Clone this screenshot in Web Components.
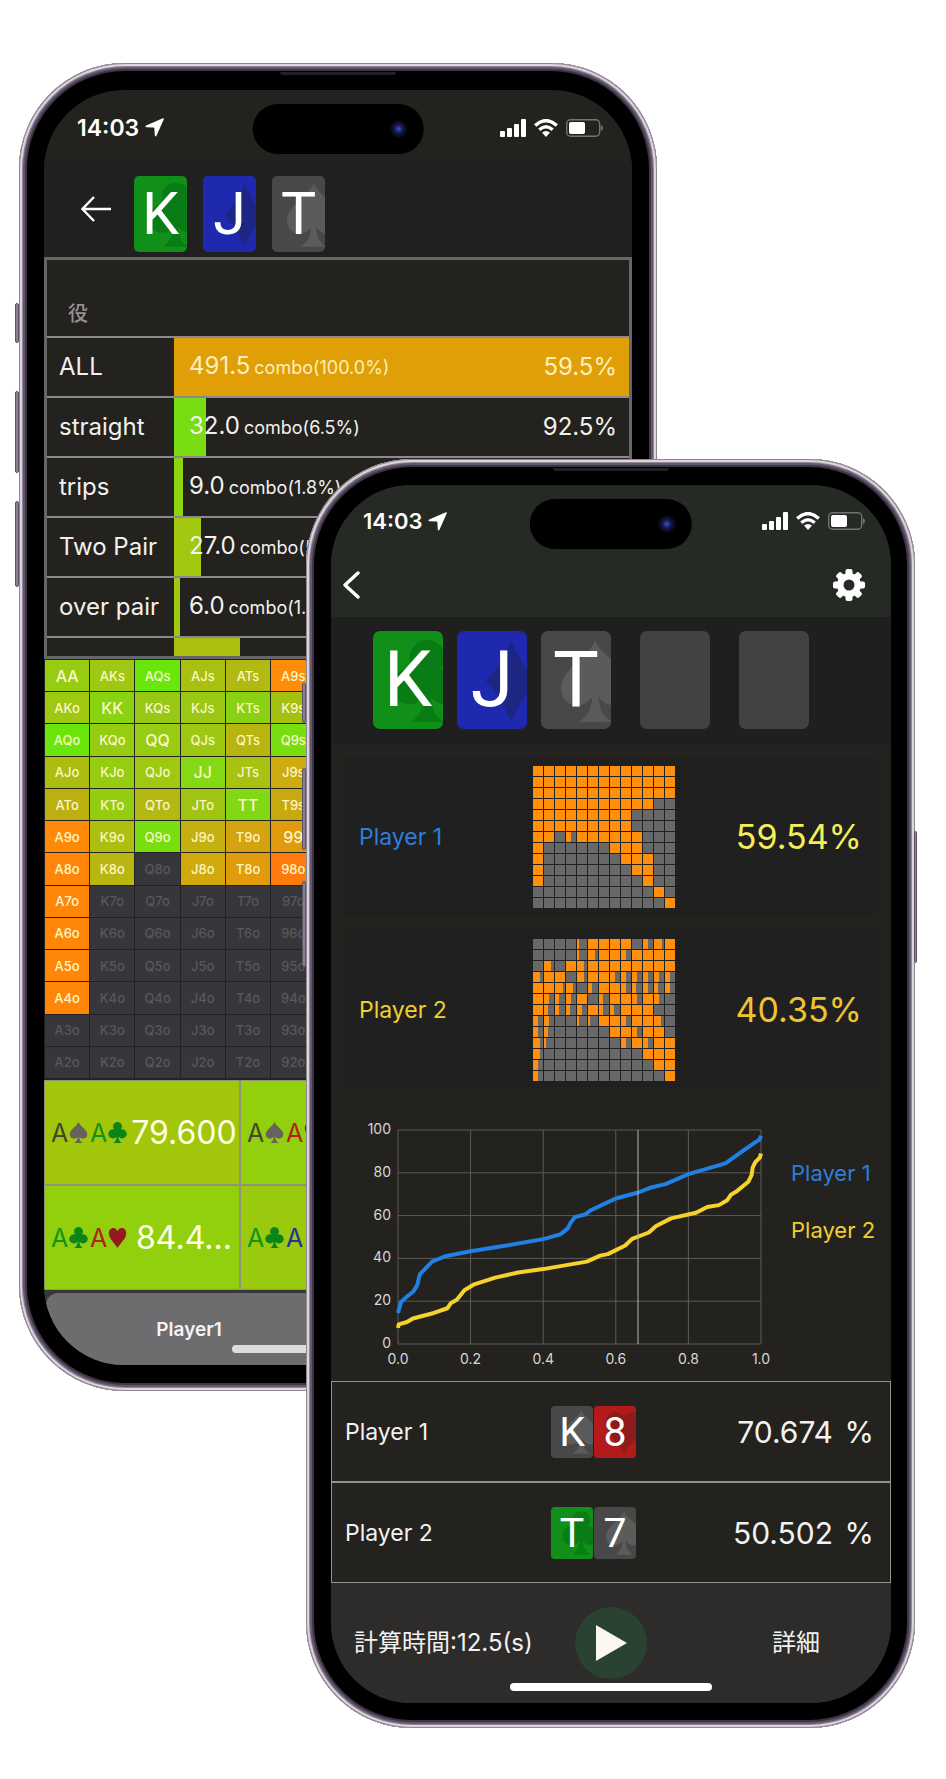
<!DOCTYPE html>
<html lang="ja">
<head>
<meta charset="utf-8">
<meta name="viewport" content="width=device-width, initial-scale=1">
<title>Poker equity calculator</title>
<style>
  body { margin: 0; background: #fff; font-family: Inter, "Noto Sans CJK JP", sans-serif; color: #f2f2f0; }
</style>
</head>
<body>
<app-stage></app-stage>

<script>
const define = (name, html, setup) => {
  const template = document.createElement('template');
  template.innerHTML = html;
  customElements.define(name, class extends HTMLElement {
    constructor() {
      super();
      this.attachShadow({ mode: 'open' }).append(template.content.cloneNode(true));
    }
    connectedCallback() {
      if (setup && !this.ready) { this.ready = true; setup(this, this.shadowRoot); }
    }
  });
};

/* Suit outlines on a 20 x 24 canvas */
const SUITS = {
  s: '<path d="M10 0C11 4 20 8.500 20 14C20 17.500 17.600 19 15.400 19C13.400 19 11.800 18 10.900 16.500C11 20 12.300 22.500 15 24H5C7.700 22.500 9 20 9.100 16.500C8.200 18 6.600 19 4.600 19C2.400 19 0 17.500 0 14C0 8.500 9 4 10 0Z"/>',
  c: '<path d="M10 0A5 5 0 0 1 13.600 8.600A5.200 5.200 0 1 1 11 16.500C11.200 20 12.400 22.600 15 24H5C7.600 22.600 8.800 20 9 16.500A5.200 5.200 0 1 1 6.400 8.600A5 5 0 0 1 10 0Z"/>',
  d: '<path d="M10 0C12 5 14.500 9 17.500 12C14.500 15 12 19 10 24C8 19 5.500 15 2.500 12C5.500 9 8 5 10 0Z"/>',
  h: '<path d="M10 24C8 19.500 0 13.500 0 7C0 3.500 2.300 1 5.200 1C7.500 1 9.300 2.500 10 4.800C10.700 2.500 12.500 1 14.800 1C17.700 1 20 3.500 20 7C20 13.500 12 19.500 10 24Z"/>'
};
const suitSvg = s => `<svg viewBox="0 0 20 24" aria-hidden="true">${SUITS[s]}</svg>`;

define('device-frame', `
<style>
  :host { display: block; position: relative; box-sizing: border-box; background: #000; border-radius: 106px;
    box-shadow: inset 0 0 0 1px #8d8790, inset 0 0 0 3px #ddd5de, inset 0 0 0 4px #94889a, inset 0 0 0 6px #62576c, inset 0 0 0 8px #3c3545; }
  .screen { position: relative; overflow: hidden; border-radius: 80px; background: #24221f; }
  .key { position: absolute; width: 4px; box-sizing: border-box; background: #8b8093; border: 1px solid #5d5366; border-radius: 2px; }
  .left { left: -4px; }
  .mute { top: var(--mute); height: 40px; }
  .up { top: var(--up); height: 82px; }
  .down { top: var(--down); height: 86px; }
  .power { display: var(--power, block); right: -2px; top: 372px; height: 132px; width: 3px; }
  .speaker { position: absolute; top: 9px; left: 50%; width: 116px; margin-left: -58px; height: 3px; border-radius: 0 0 3px 3px; background: #222226; }
  .home { position: absolute; bottom: 12px; left: 50%; width: 36%; margin-left: -18%; height: 8px; border-radius: 4px; background: var(--home, #fff); }
</style>
<i class="key left mute"></i><i class="key left up"></i><i class="key left down"></i><i class="key power"></i>
<i class="speaker"></i>
<div class="screen"><slot></slot><i class="home"></i></div>`);

define('status-bar', `
<style>
  :host { display: flex; align-items: center; box-sizing: border-box; position: relative; height: var(--bar, 71px); padding: 4px 29px 0 33px; color: #fff; }
  time { font-weight: 600; font-size: var(--clock, 23px); line-height: 28px; margin-right: 6px; }
  svg { display: block; fill: currentColor; }
  .icons { display: flex; align-items: center; gap: 8px; margin-left: auto; }
  .island { position: absolute; top: 14px; left: 50%; width: 29%; height: 50px; transform: translateX(-50%); background: #000; border-radius: 25px; }
  .lens { position: absolute; right: 16px; top: 16px; width: 18px; height: 18px; border-radius: 50%;
    background: radial-gradient(circle, #3546a8 0 1px, #151a55 4px, #0b0b22 7px, #050508 9px); }
</style>
<time>14:03</time>
<svg width="19" height="19" viewBox="0 0 19 19" role="img" aria-label="Location"><path d="M17.800 .3Q19.200 .2 18.700 1.500L11.600 17.600Q10.400 19.500 9.800 17.400L9.400 10.600Q9.300 9.700 8.400 9.600L1.600 9.200Q-.6 8.700 1.200 7.500Z"/></svg>
<div class="island"><div class="lens"></div></div>
<div class="icons">
  <svg width="26" height="18" viewBox="0 0 26 18" role="img" aria-label="Signal"><rect y="12" width="5" height="6" rx="1"/><rect x="7" y="9" width="5" height="9" rx="1"/><rect x="14" y="5" width="5" height="13" rx="1"/><rect x="21" width="5" height="18" rx="1"/></svg>
  <svg width="24" height="18" viewBox="0 0 24 18" role="img" aria-label="Wi-Fi"><g fill="none" stroke="currentColor" stroke-width="3.400"><path d="M1.200 6.600Q12-3.400 22.800 6.600"/><path d="M5.300 10.800Q12 4.800 18.700 10.800"/></g><path d="M8 13.600Q12 10.400 16 13.600L12 18Z"/></svg>
  <svg width="37" height="18" viewBox="0 0 37 18" role="img" aria-label="Battery"><rect x=".7" y=".7" width="33" height="16.600" rx="4" fill="none" stroke="#74746f" stroke-width="1.400"/><rect x="3" y="3" width="16" height="12" rx="2"/><path d="M35 6Q37 7 37 9T35 12Z" fill="#74746f"/></svg>
</div>`);

define('playing-card', `
<style>
  :host { display: block; position: relative; overflow: hidden; flex: none; width: var(--w); height: var(--h); border-radius: var(--r, 6px);
    background: #424242; color: #fff; text-align: center; font: 400 var(--fs)/var(--h) Roboto, sans-serif; }
  :host([suit=c]) { background: #109018; } :host([suit=d]) { background: #1f29b0; }
  :host([suit=s]) { background: #484848; } :host([suit=h]) { background: #b31b1b; }
  svg { position: absolute; left: 28%; top: 9%; height: 84%; width: auto; }
  :host([suit=c]) svg { fill: #0a7c16; } :host([suit=d]) svg { fill: #1d2683; }
  :host([suit=s]) svg { fill: #5b5b5b; } :host([suit=h]) svg { fill: #8c1b1b; }
  span { position: relative; }
</style><div class="pip"></div><span><slot></slot></span>`, (el, root) => {
  const suit = el.getAttribute('suit');
  if (suit) root.querySelector('.pip').innerHTML = suitSvg(suit);
});

define('hand-ranking', `
<style>
  :host { display: block; border: 3px solid #66656a; background: #24221f; }
  table { width: 100%; border-collapse: separate; border-spacing: 0; table-layout: fixed; }
  th, td { box-sizing: border-box; height: 60px; padding: 0; border-bottom: 2px solid #8b8a8b; font-weight: 400; font-size: 24px; line-height: 30px; text-align: left; color: #f2f1ee; white-space: nowrap; }
  thead th { height: 78px; padding: 30px 0 0 21px; font: 500 20px/24px "Noto Sans CJK JP", sans-serif; color: #929196; }
  tbody th { padding-left: 12px; }
  col.name { width: 127px; } col.odds { width: 110px; }
  td.combo { padding-left: 15px; }
  td.odds { text-align: right; padding-right: 12px; }
  small { font-size: 18px; margin-left: 4px; }
  .all td { color: #ffeebb; }
  tr.cut > * { height: 18px; border: 0; }
  tr { background: linear-gradient(var(--c), var(--c)) 127px 0 / var(--n) 100% no-repeat; }
</style>
<table><colgroup><col class="name"><col><col class="odds"></colgroup>
<thead><tr><th colspan="3" scope="col">役</th></tr></thead><tbody></tbody></table>`, (el, root) => {
  const rows = [
    ['ALL', '491.5', '(100.0%)', '59.5%', '#e09f06', '460px', 'all'],
    ['straight', '32.0', '(6.5%)', '92.5%', '#7add14', '32px', ''],
    ['trips', '9.0', '(1.8%)', '', '#8cd40f', '9px', ''],
    ['Two Pair', '27.0', '(5', '', '#a2c80f', '27px', ''],
    ['over pair', '6.0', '(1.', '', '#a0ca10', '6px', '']
  ];
  root.querySelector('tbody').innerHTML = rows.map(([n, c, p, o, col, w, k]) =>
    `<tr class="${k}" style="--c:${col};--n:${w}"><th scope="row">${n}</th><td class="combo">${c}<small>combo${p}</small></td><td class="odds">${o}</td></tr>`
  ).join('') + '<tr class="cut" style="--c:#aabf10;--n:66px"><td></td><td></td><td></td></tr>';
});

define('hand-grid', `
<style>
  :host { display: grid; grid-template-columns: repeat(13, 1fr); grid-template-rows: repeat(13, 1fr); gap: 1px; height: 420px; box-sizing: border-box; padding: 1px 0 1px 1px; background: #222; }
  span { display: flex; align-items: center; justify-content: center; min-width: 0; font-size: 13px; font-weight: 500; color: #fbf6c4; background: #37363a; }
  .pair { font-size: 16px; }
  .off { color: #59585c; }
</style>`, (el, root) => {
  const ranks = 'AKQJT98765432';
  const shade = [
    '96cc12 9ec812 6ae60c a8c010 b0ba12 ff8c08', '9ec812 8ad312 96c814 9ac814 8ad014 a4c010',
    '6ae60c 96cc12 98cc12 9cc814 b8b410 78de10', 'acbc10 96cc12 9ec812 84d814 a8c212 ccac10',
    'bcb010 94cc12 b4b812 a0c412 82d814 c8aa10', 'ff8a0a acbe10 78de10 c4b010 d4a410 e09a0c',
    'ff860a b8b610 - d0aa0c e09c0c ff7a0c', 'ff8608', 'ff8608', 'ff8608', 'ff8608', '', ''
  ].map(r => r.split(' '));
  for (let r = 0; r < 13; r++) for (let c = 0; c < 6; c++) {
    const cell = document.createElement('span');
    const hi = ranks[Math.min(r, c)], lo = ranks[Math.max(r, c)];
    cell.textContent = hi + lo + (r === c ? '' : r < c ? 's' : 'o');
    cell.style.gridArea = `${r + 1} / ${c + 1}`;
    const color = shade[r][c];
    if (color && color !== '-') cell.style.background = '#' + color; else cell.className = 'off';
    if (r === c) cell.classList.add('pair');
    root.append(cell);
  }
});

define('combo-list', `
<style>
  :host { display: grid; grid-template-columns: repeat(3, 1fr); gap: 2px; padding: 1px; margin-top: 1px; background: #8f9377; }
  .combo { display: flex; align-items: center; height: 103px; padding-left: 6px; min-width: 0; font-size: 25px; line-height: 30px; }
  .combo svg { width: 21px; height: 21px; flex: none; fill: currentColor; }
  .s { color: #45462e; } .s svg { fill: #67625f; } .c { color: #13931a; } .c svg { fill: #0b8418; }
  .h { color: #ae2418; } .h svg { fill: #951a20; } .d { color: #23309a; }
  .card { display: flex; align-items: center; width: 39px; }
  .value { flex: 1; text-align: center; font-size: 32px; line-height: 38px; color: #fffde6; }
</style>`, (el, root) => {
  const list = [['s', 'c', '79.600', '#a2c60a'], ['s', 'h', '', '#92d00e'], null, ['c', 'h', '84.4...', '#92d00e'], ['c', 'd', '', '#9aca0e']];
  list.forEach((item, i) => {
    const box = document.createElement('div');
    box.className = 'combo';
    if (item) {
      const [a, b, value, color] = item;
      box.style.background = color;
      box.innerHTML = [a, b].map(s => `<span class="card ${s}">A${suitSvg(s)}</span>`).join('') + `<span class="value">${value}</span>`;
    } else box.style.background = '#92d00e';
    root.append(box);
  });
});

define('detail-screen', `
<style>
  :host { display: block; }
  header { display: flex; align-items: flex-start; gap: 16px; height: 96px; box-sizing: border-box; padding: 15px 0 0 37px; background: #202021; }
  button { font: inherit; color: inherit; border: 0; padding: 0; background: none; }
  .back { width: 37px; height: 66px; }
  .back svg { display: block; }
  playing-card { --w: 53px; --h: 76px; --fs: 59px; --r: 5px; }
  nav { display: flex; height: 75px; box-sizing: border-box; padding: 3px 2px 0; background: #38383a; }
  .tabs { flex: 1; display: flex; border-radius: 12px 12px 0 0; background: #6d6d70; }
  .tabs button { width: 49%; font-size: 19px; font-weight: 600; color: #f4f4f4; }
</style>
<status-bar></status-bar>
<header>
  <button class="back" aria-label="Back"><svg width="30" height="30" viewBox="0 0 30 30" fill="none" stroke="#fff" stroke-width="2.400"><path d="M13 3L1.500 15L13 27M1.500 15H30"/></svg></button>
  <playing-card suit="c">K</playing-card><playing-card suit="d">J</playing-card><playing-card suit="s">T</playing-card>
</header>
<hand-ranking></hand-ranking>
<hand-grid></hand-grid>
<combo-list></combo-list>
<nav><div class="tabs"><button>Player1</button></div></nav>`);

define('range-map', `
<style>
  :host { display: grid; grid-template: repeat(13, 1fr) / repeat(13, 1fr); gap: 1px; width: 142px; height: 142px; }
  i { background: linear-gradient(90deg, #ff8f0c var(--f), #686868 var(--f)); }
</style>`, (el, root) => {
  for (const ch of el.getAttribute('cells').replace(/\s/g, '')) {
    const i = document.createElement('i');
    i.style.setProperty('--f', ch === '#' ? '100%' : ch === '.' ? '0%' : ch + '0%');
    root.append(i);
  }
});

define('player-range', `
<style>
  :host { display: grid; grid-template-columns: 174px 142px 1fr; align-items: center; height: 160px; box-sizing: border-box; padding: 0 16px 0 15px; background: #202020; border-radius: 4px; }
  .name { font-size: 23px; line-height: 28px; color: var(--name); }
  .odds { font-size: 34px; line-height: 40px; text-align: right; color: var(--odds); }
</style>
<span class="name"><slot name="name"></slot></span><slot></slot><span class="odds"><slot name="odds"></slot></span>`);

define('equity-chart', `
<style>
  :host { display: grid; grid-template-columns: 450fr 110fr; height: 290px; }
  svg { width: 100%; height: 290px; }
  text { font-size: 14px; fill: #d8d8d4; }
  .grid { stroke: #5c5b57; stroke-width: 1; fill: none; }
  .line { fill: none; stroke-width: 4; stroke-linejoin: round; }
  ul { min-width: 0; margin: 0; padding: 68px 0 0 10px; box-sizing: border-box; list-style: none; font-size: 22px; line-height: 28px; white-space: nowrap; }
  li + li { margin-top: 29px; }
  .one { color: #2b7fdb; } .two { color: #f0d030; }
</style>
<svg viewBox="0 0 450 290" role="img" aria-label="Equity"></svg>
<ul><li class="one">Player 1</li><li class="two">Player 2</li></ul>`, (el, root) => {
  const X = v => 67 + v * 363, Y = v => 253 - v * 2.14;
  const one = [0,14.5,.008,19.5,.017,21,.042,24.5,.053,27.5,.06,32.5,.094,38.5,.13,41,.2,43.3,.278,45.4,.4,49,.447,51.2,.468,54,.475,56.5,.487,59.3,.515,60.5,.531,62.5,.6,68,.662,70.8,.694,73,.737,74.7,.8,79.4,.902,84.4,.953,90.6,.984,94.2,.996,95.5,1,97.3];
  const two = [0,7.5,.002,9.2,.025,10.3,.041,11.9,.099,14.5,.136,16.7,.146,19.2,.162,20.7,.183,25.1,.21,27.9,.268,31,.331,33.4,.4,35,.52,38.5,.557,41.3,.578,42,.626,46,.645,49.1,.691,52.1,.71,55,.752,58.7,.821,61.3,.852,64,.884,64.9,.907,67.2,.918,69.9,.931,71.1,.965,75.8,.974,78.9,.977,82.4,.984,84.9,.997,87.2,1,89];
  const line = (d, color) => {
    let p = '';
    for (let i = 0; i < d.length; i += 2) p += `${X(d[i])},${Y(d[i + 1])} `;
    return `<polyline class="line" stroke="${color}" points="${p}"/>`;
  };
  let out = '';
  for (let i = 0; i <= 5; i++) {
    out += `<path class="grid" d="M${X(i / 5)} 39V253M67 ${Y(i * 20)}H430"/>`;
    out += `<text x="60" y="${Y(i * 20) + 4}" text-anchor="end">${i * 20}</text>`;
    out += `<text x="${X(i / 5)}" y="273" text-anchor="middle">${(i / 5).toFixed(1)}</text>`;
  }
  root.querySelector('svg').innerHTML = out + line(one, '#2080e4') + line(two, '#f6d22c') + '<path stroke="#b4b4b0" d="M307 39V253"/>';
});

define('result-row', `
<style>
  :host { display: grid; grid-template-columns: 206px 86px 1fr 41px; align-items: center; height: 101px; box-sizing: border-box; border: 1px solid #93928f; padding: 0 16px 0 13px; background: #24221f; }
  .name { font-size: 23px; line-height: 28px; }
  .cards { display: flex; gap: 1px; }
  .value, .unit { font-size: 30px; line-height: 36px; text-align: right; }
  ::slotted(playing-card) { --w: 42px; --h: 52px; --fs: 41px; --r: 4px; }
</style>
<span class="name"><slot name="name"></slot></span><span class="cards"><slot></slot></span><span class="value"><slot name="value"></slot></span><span class="unit">%</span>`);

define('equity-screen', `
<style>
  :host { display: block; }
  status-bar { --bar: 68px; --clock: 22px; padding-right: 26px; padding-left: 32px; }
  button { font: inherit; color: inherit; border: 0; padding: 0; background: none; }
  svg { display: block; }
  .top { background: #262a24; }
  .bar { display: flex; justify-content: space-between; align-items: center; height: 64px; padding: 0 25px 0 11px; }
  .board { display: flex; height: 127px; box-sizing: border-box; padding: 14px 42px; background: #1f1f1f; }
  .board playing-card { --w: 70px; --h: 98px; --fs: 77px; --r: 7px; margin-right: 14px; }
  .board playing-card:nth-child(n+3) { margin-right: 29px; }
  .ranges { display: grid; gap: 13px; padding: 13px 13px 1px; }
  footer { display: grid; grid-template-columns: 1fr 72px 1fr; align-items: center; height: 120px; background: #2e2c2b; font-size: 24px; line-height: 32px; }
  .time { padding-left: 23px; white-space: nowrap; }
  .play { width: 72px; height: 72px; border-radius: 50%; background: #2a4231; display: grid; place-items: center; }
  .detail { justify-self: center; padding-left: 54px; }
</style>
<div class="top"><status-bar></status-bar>
<div class="bar">
  <button aria-label="Back"><svg width="18" height="30" viewBox="0 0 18 30" fill="none" stroke="#fff" stroke-width="3.400" stroke-linecap="round" stroke-linejoin="round"><path d="M16 3L3 15L16 27"/></svg></button>
  <button aria-label="Settings"><svg width="34" height="34" viewBox="0 0 34 34"><g fill="#fff"><circle cx="17" cy="17" r="12"/><rect x="13.500" y="1" width="7" height="32" rx="2"/><rect x="1" y="13.500" width="32" height="7" rx="2"/><g transform="rotate(45 17 17)"><rect x="13.500" y="1" width="7" height="32" rx="2"/><rect x="1" y="13.500" width="32" height="7" rx="2"/></g></g><circle cx="17" cy="17" r="5.500" fill="#262a24"/></svg></button>
</div></div>
<div class="board"><playing-card suit="c">K</playing-card><playing-card suit="d">J</playing-card><playing-card suit="s">T</playing-card><playing-card></playing-card><playing-card></playing-card></div>
<div class="ranges">
  <player-range style="--name:#2b7fdb;--odds:#f5ee58"><span slot="name">Player 1</span>
    <range-map cells="############# ############# ############# ###########.. #########.... #########.... ##.5######... #......###... #.......###.. #........##.. #.........#.. ...........#. ............#"></range-map>
    <span slot="odds">59.54%</span></player-range>
  <player-range style="--name:#f0d030;--odds:#efc432"><span slot="name">Player 2</span>
    <range-map cells="....2####.58# ....27##5#### .7.#7######## 7##.7##555555 ##87.4##54545 #545#.4##5#5. #4445#44###.. 55..22##5##7. 54.....##5##. 72......5#5## 7.........### 5..........## 5...........#"></range-map>
    <span slot="odds">40.35%</span></player-range>
</div>
<equity-chart></equity-chart>
<result-row><span slot="name">Player 1</span><playing-card suit="s">K</playing-card><playing-card suit="h">8</playing-card><span slot="value">70.674</span></result-row>
<result-row><span slot="name">Player 2</span><playing-card suit="c">T</playing-card><playing-card suit="s">7</playing-card><span slot="value">50.502</span></result-row>
<footer><span class="time">計算時間:12.5(s)</span>
  <button class="play" aria-label="Run"><svg width="32" height="36" viewBox="0 0 32 36"><path d="M1 0L32 18L1 36Z" fill="#faf6f0"/></svg></button>
  <button class="detail">詳細</button></footer>`);

define('app-stage', `
<style>
  :host { display: grid; grid-template-columns: 19fr 287fr 351fr 258fr 31fr; align-items: start; padding-bottom: 50px; }
  device-frame { grid-row: 1; min-width: 0; }
  .back { grid-column: 2 / 4; margin-top: 63px; padding: 27px 25px 26px; --home: #dcdcdc; --mute: 240px; --up: 328px; --down: 438px; --power: none; }
  .front { grid-column: 3 / 5; margin-top: 459px; padding: 26px 24px 25px 25px; --mute: 224px; --up: 309px; --down: 422px; }
</style>
<device-frame class="back"><detail-screen></detail-screen></device-frame>
<device-frame class="front"><equity-screen></equity-screen></device-frame>`);
</script>
</body>
</html>
